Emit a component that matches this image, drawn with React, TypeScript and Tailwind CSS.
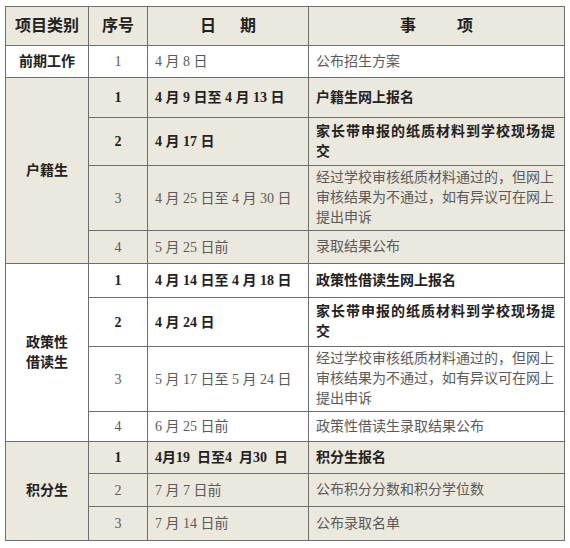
const font = { fontFamily: '"Liberation Serif", "Noto Sans CJK SC", serif' };

type Row = {
  h: number;
  no: string;
  date: string;
  item: string;
  bold?: boolean;
  wrap?: boolean;
};

type Group = {
  name: string[];
  bg: string;
  rows: Row[];
};

const groups: Group[] = [
  {
    name: ["前期工作"],
    bg: "bg-white",
    rows: [{ h: 32, no: "1", date: "4 月 8 日", item: "公布招生方案" }],
  },
  {
    name: ["户籍生"],
    bg: "bg-[#ebe8de]",
    rows: [
      { h: 40, no: "1", date: "4 月 9 日至 4 月 13 日", item: "户籍生网上报名", bold: true },
      {
        h: 48,
        no: "2",
        date: "4 月 17 日",
        item: "家长带申报的纸质材料到学校现场提交",
        bold: true,
        wrap: true,
      },
      {
        h: 65,
        no: "3",
        date: "4 月 25 日至 4 月 30 日",
        item: "经过学校审核纸质材料通过的，但网上审核结果为不通过，如有异议可在网上提出申诉",
      },
      { h: 33, no: "4", date: "5 月 25 日前", item: "录取结果公布" },
    ],
  },
  {
    name: ["政策性", "借读生"],
    bg: "bg-white",
    rows: [
      { h: 34, no: "1", date: "4 月 14 日至 4 月 18 日", item: "政策性借读生网上报名", bold: true },
      {
        h: 49,
        no: "2",
        date: "4 月 24 日",
        item: "家长带申报的纸质材料到学校现场提交",
        bold: true,
        wrap: true,
      },
      {
        h: 65,
        no: "3",
        date: "5 月 17 日至 5 月 24 日",
        item: "经过学校审核纸质材料通过的，但网上审核结果为不通过，如有异议可在网上提出申诉",
      },
      { h: 30, no: "4", date: "6 月 25 日前", item: "政策性借读生录取结果公布" },
    ],
  },
  {
    name: ["积分生"],
    bg: "bg-[#ebe8de]",
    rows: [
      { h: 32, no: "1", date: "4月19  日至4  月30  日", item: "积分生报名", bold: true },
      { h: 33, no: "2", date: "7 月 7 日前", item: "公布积分分数和积分学位数" },
      { h: 34, no: "3", date: "7 月 14 日前", item: "公布录取名单" },
    ],
  },
];

const cell = "border border-[#6e6e6e] align-middle";

export default function App() {
  return (
    <div className="w-[570px] h-[548px] bg-white pl-[5px] pt-[6px]" style={font}>
      <table className="table-fixed border-collapse w-[559px]">
        <colgroup>
          <col className="w-[83px]" />
          <col className="w-[59px]" />
          <col className="w-[161px]" />
          <col className="w-[256px]" />
        </colgroup>
        <thead>
          <tr className="h-[39px] bg-[#ebe8de] text-[16px] font-bold text-[#222]">
            <th className={`${cell} text-center`}>项目类别</th>
            <th className={`${cell} text-center`}>序号</th>
            <th className={`${cell} text-center`}>
              <span className="inline-flex gap-6">
                <span>日</span>
                <span>期</span>
              </span>
            </th>
            <th className={`${cell} text-center`}>
              <span className="inline-flex gap-[41px]">
                <span>事</span>
                <span>项</span>
              </span>
            </th>
          </tr>
        </thead>
        <tbody>
          {groups.map((g) =>
            g.rows.map((r, i) => {
              const tone = r.bold ? "font-bold text-[#222]" : "text-[#5a5a5a]";
              return (
                <tr key={g.name.join("") + i} className={g.bg} style={{ height: r.h }}>
                  {i === 0 && (
                    <td
                      rowSpan={g.rows.length}
                      className={`${cell} text-center text-[14px] leading-5 font-bold text-[#222]`}
                    >
                      {g.name.map((n) => (
                        <div key={n}>{n}</div>
                      ))}
                    </td>
                  )}
                  <td className={`${cell} text-center text-[14px] ${tone}`}>{r.no}</td>
                  <td className={`${cell} px-[7px] text-[14px] whitespace-pre ${tone}`}>
                    {r.date}
                  </td>
                  <td
                    className={`${cell} px-[7px] text-[14px] leading-5 ${tone} ${
                      r.wrap ? "tracking-[1px]" : ""
                    }`}
                  >
                    {r.item}
                  </td>
                </tr>
              );
            })
          )}
        </tbody>
      </table>
    </div>
  );
}
